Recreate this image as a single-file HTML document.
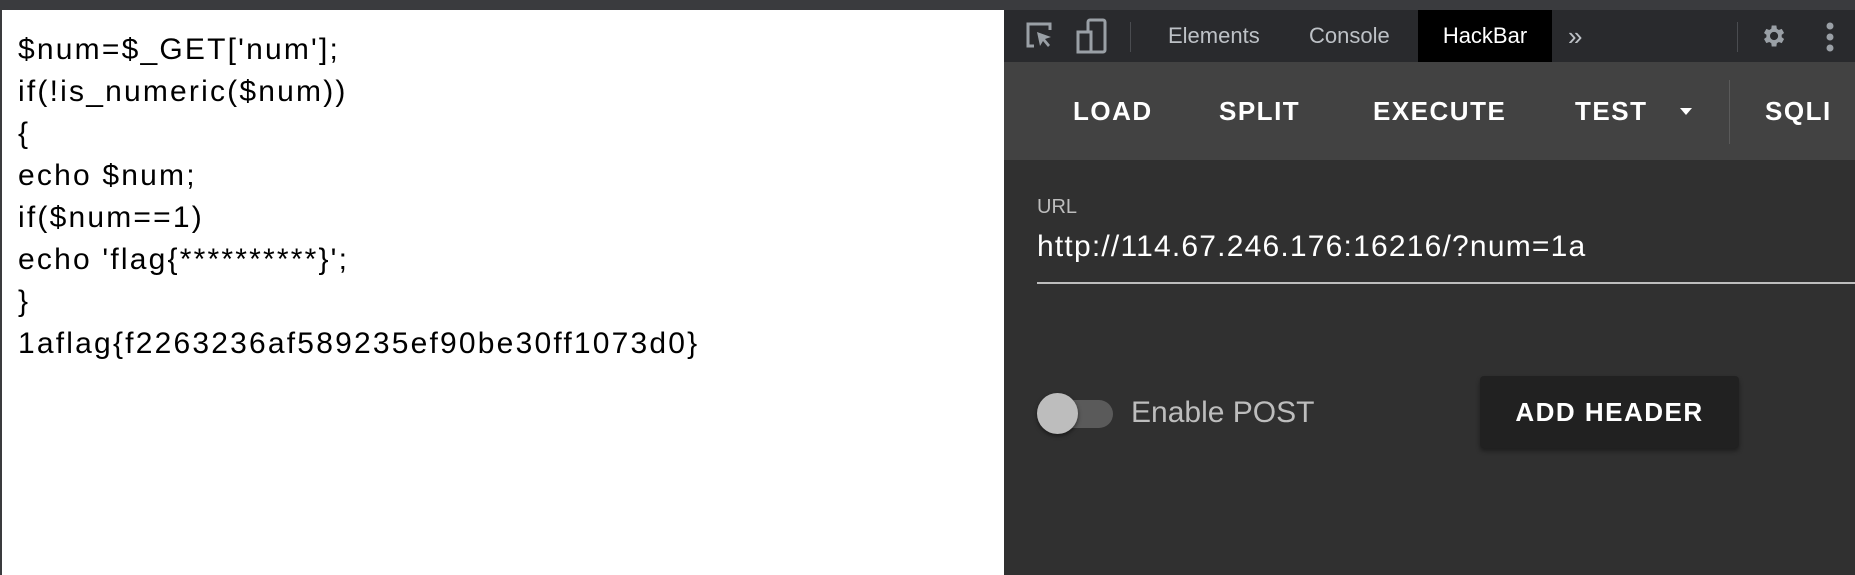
<!DOCTYPE html>
<html><head><meta charset="utf-8"><style>
*{margin:0;padding:0;box-sizing:border-box}
body{width:1855px;height:575px;overflow:hidden;background:#3a3b3e;position:relative;font-family:"Liberation Sans",sans-serif}
.a{position:absolute}
#page{left:2px;top:10px;width:1002px;height:565px;background:#fff}
#code{left:18px;top:29px;font-size:30px;line-height:42px;color:#000;white-space:pre;letter-spacing:2.2px}
#dt{left:1004px;top:10px;width:851px;height:565px;background:#303030}
#tb{left:1004px;top:10px;width:851px;height:52px;background:#292a2d}
#hb{left:1004px;top:62px;width:851px;height:98px;background:#424242}
.tab{top:10px;height:52px;line-height:52px;font-size:22px;color:#bdc1c6}
.btn{top:62px;height:98px;line-height:98px;font-size:26px;font-weight:bold;color:#fff;letter-spacing:1.5px}
</style></head><body>
<div class="a" id="page"></div>
<div class="a" id="code">$num=$_GET['num'];
if(!is_numeric($num))
{
echo $num;
if($num==1)
echo 'flag{**********}';
}
1aflag{f2263236af589235ef90be30ff1073d0}</div>
<div class="a" id="dt"></div>
<div class="a" id="tb"></div>
<svg class="a" style="left:1024px;top:20px" width="34" height="34" viewBox="0 0 34 34"><path d="M10 26H4V4h22v6" fill="none" stroke="#9aa0a6" stroke-width="3"/><path d="M13 12l14 5-6 2 5 6-2 2-5-6-3 5z" fill="#9aa0a6"/></svg>
<svg class="a" style="left:1076px;top:18px" width="34" height="38" viewBox="0 0 34 38"><rect x="12" y="2" width="17" height="32" rx="2" fill="none" stroke="#9aa0a6" stroke-width="3"/><rect x="2" y="14" width="13" height="20" fill="#292a2d" stroke="#9aa0a6" stroke-width="3"/></svg>
<div class="a" style="left:1130px;top:22px;width:1px;height:30px;background:#4a4c50"></div>
<div class="a tab" style="left:1168px">Elements</div>
<div class="a tab" style="left:1309px">Console</div>
<div class="a tab" style="left:1418px;width:134px;background:#000;color:#fff;text-align:center">HackBar</div>
<div class="a tab" style="left:1568px;font-size:26px">»</div>
<div class="a" style="left:1737px;top:22px;width:1px;height:30px;background:#4a4c50"></div>
<svg class="a" style="left:1759px;top:22px" width="28" height="28" viewBox="0 0 24 24"><path fill="#9aa0a6" d="M19.4 13a7.5 7.5 0 000-2l2.1-1.6-2-3.5-2.5 1a7 7 0 00-1.7-1L14.9 3h-4l-.4 2.9a7 7 0 00-1.7 1l-2.5-1-2 3.5L6.4 11a7.5 7.5 0 000 2l-2.1 1.6 2 3.5 2.5-1a7 7 0 001.7 1l.4 2.9h4l.4-2.9a7 7 0 001.7-1l2.5 1 2-3.5zM12.9 15.5a3.5 3.5 0 110-7 3.5 3.5 0 010 7z"/></svg>
<svg class="a" style="left:1826px;top:22px" width="8" height="30"><circle cx="4" cy="4" r="3.5" fill="#9aa0a6"/><circle cx="4" cy="15" r="3.5" fill="#9aa0a6"/><circle cx="4" cy="26" r="3.5" fill="#9aa0a6"/></svg>
<div class="a" id="hb"></div>
<div class="a btn" style="left:1073px">LOAD</div>
<div class="a btn" style="left:1219px">SPLIT</div>
<div class="a btn" style="left:1373px">EXECUTE</div>
<div class="a btn" style="left:1575px">TEST</div>
<div class="a" style="left:1680px;top:108px;width:0;height:0;border-left:6px solid transparent;border-right:6px solid transparent;border-top:7px solid #fff"></div>
<div class="a" style="left:1729px;top:80px;width:1px;height:64px;background:#5a5a5a"></div>
<div class="a btn" style="left:1765px">SQLI</div>
<div class="a" style="left:1037px;top:196px;font-size:20px;color:#bdbdbd">URL</div>
<div class="a" style="left:1037px;top:230px;font-size:30px;color:#fff;letter-spacing:1.2px">http://114.67.246.176:16216/?num=1a</div>
<div class="a" style="left:1037px;top:282px;width:818px;height:2px;background:#bdbdbd"></div>
<div class="a" style="left:1050px;top:400px;width:63px;height:28px;border-radius:14px;background:#5a5a5a"></div>
<div class="a" style="left:1037px;top:393px;width:41px;height:41px;border-radius:50%;background:#bdbdbd;box-shadow:0 2px 4px rgba(0,0,0,.5)"></div>
<div class="a" style="left:1131px;top:396px;font-size:30px;color:#bdbdbd">Enable POST</div>
<div class="a" style="left:1480px;top:376px;width:259px;height:72px;background:#212121;border-radius:4px;box-shadow:0 3px 5px rgba(0,0,0,.4);color:#fff;font-weight:bold;font-size:26px;letter-spacing:1.5px;text-align:center;line-height:72px">ADD HEADER</div>
</body></html>
